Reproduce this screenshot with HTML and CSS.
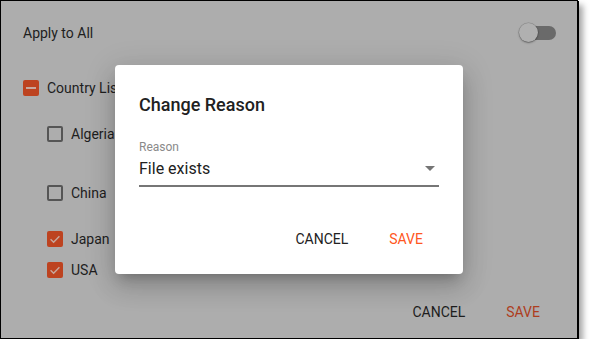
FILE: index.html
```html
<!DOCTYPE html>
<html>
<head>
<meta charset="utf-8">
<link rel="stylesheet" href="styles.css">
</head>
<body>
<div class="frame">
  <div class="page">
    <div class="header">
      <span class="label">Apply to All</span>
      <span class="toggle"><span class="track"></span><span class="thumb"></span></span>
    </div>
    <div class="row row-country">
      <span class="cb cb-on"><span class="dash"></span></span>
      <span class="label">Country List</span>
    </div>
    <div class="row child row-algeria">
      <span class="cb"></span>
      <span class="label">Algeria</span>
    </div>
    <div class="row child row-china">
      <span class="cb"></span>
      <span class="label">China</span>
    </div>
    <div class="row child row-japan">
      <span class="cb cb-on"><svg viewBox="0 0 16 16" width="16" height="16"><path d="M3.6 8.2l3 3 5.8-6" fill="none" stroke="#c7a89e" stroke-width="1.4"/></svg></span>
      <span class="label">Japan</span>
    </div>
    <div class="row child row-usa">
      <span class="cb cb-on"><svg viewBox="0 0 16 16" width="16" height="16"><path d="M3.6 8.2l3 3 5.8-6" fill="none" stroke="#c7a89e" stroke-width="1.4"/></svg></span>
      <span class="label">USA</span>
    </div>
    <div class="footer">
      <button class="btn btn-dim">CANCEL</button>
      <button class="btn btn-dim-accent">SAVE</button>
    </div>
  </div>
  <div class="backdrop">
    <div class="dialog">
      <div class="dlg-title">Change Reason</div>
      <div class="field">
        <div class="field-label">Reason</div>
        <div class="field-input">
          <span class="field-value">File exists</span>
          <span class="arrow"></span>
        </div>
      </div>
      <div class="dlg-actions">
        <button class="btn">CANCEL</button>
        <button class="btn btn-accent">SAVE</button>
      </div>
    </div>
  </div>
</div>
</body>
</html>
```

FILE: styles.css
```css
* { box-sizing: border-box; }
html, body { margin: 0; padding: 0; background: #fff; }
body { font-family: Roboto, "Noto Sans", Arial, sans-serif; }

.frame {
  position: relative;
  width: 578px;
  height: 339px;
  border: 1px solid #000;
  background: #adadad;
  box-shadow: 1px 1px 0 #000, 5px 5px 6px rgba(0,0,0,.35);
}

.page {
  display: flex;
  flex-direction: column;
  padding: 8px 21px 0 22px;
}

.header {
  height: 48px;
  display: flex;
  align-items: center;
  justify-content: space-between;
}
.label { font-size: 14px; color: #1e1e1e; }

.toggle { position: relative; width: 37px; height: 20px; }
.track {
  position: absolute; left: 3px; right: 0; top: 3px;
  height: 14px; border-radius: 7px; background: #6a6a6a;
}
.thumb {
  position: absolute; left: 0; top: 0;
  width: 19px; height: 19px; border-radius: 50%;
  background: #b0b0b0;
  box-shadow: 0 1px 2px rgba(0,0,0,.35), 0 0 0 0.5px rgba(0,0,0,.2);
}

.row { height: 30px; display: flex; align-items: center; gap: 8px; }
.child { padding-left: 24px; }
.row-country { margin-top: 16px; }
.row-algeria { margin-top: 16px; }
.row-china { margin-top: 29px; }
.row-japan { margin-top: 16px; }
.row-usa { margin-top: 1px; }

.cb {
  width: 16px; height: 16px;
  border: 2px solid #555;
  border-radius: 2px;
  display: flex; align-items: center; justify-content: center;
  flex: none;
}
.cb-on { background: #bd4320; border: none; }
.cb-on svg { display: block; }
.dash { width: 10px; height: 2px; background: #c7a89e; }

.footer {
  display: flex; justify-content: flex-end; gap: 9px;
  margin-top: 9px;
}

.btn {
  height: 36px; min-width: 64px; padding: 0 16px;
  border: none; background: transparent;
  font-family: Roboto, "Noto Sans", Arial, sans-serif;
  font-size: 14px;
  color: #222;
}
.btn-dim { color: #1e1e1e; }
.btn-dim-accent { color: #ad3d1e; }
.btn-accent { color: #ff5722; }

.backdrop {
  position: absolute; inset: 0;
  display: flex; align-items: center; justify-content: center;
  padding-bottom: 1px;
}
.dialog {
  width: 348px; height: 209px;
  background: #fff; border-radius: 4px;
  padding: 24px 24px 0 24px;
  display: flex; flex-direction: column;
  box-shadow: 0 8px 12px -6px rgba(0,0,0,.25), 0 14px 24px 2px rgba(0,0,0,.12), 0 5px 30px 4px rgba(0,0,0,.1);
}
.dlg-title {
  font-size: 18px; font-weight: 500; line-height: 32px; color: #212121;
}
.field { margin-top: 18px; }
.field-label { font-size: 12px; line-height: 16px; color: #8a8a8a; }
.field-input {
  margin-top: 2px;
  display: flex; align-items: center; justify-content: space-between;
  height: 30px; padding-bottom: 4px;
  border-bottom: 2px solid #767676;
}
.field-value { font-size: 16px; line-height: 24px; color: #212121; }
.arrow {
  width: 0; height: 0; margin-right: 4px;
  border-left: 5px solid transparent; border-right: 5px solid transparent;
  border-top: 5px solid #757575;
}
.dlg-actions {
  display: flex; justify-content: flex-end; gap: 9px;
  margin-top: 34px;
}
```
